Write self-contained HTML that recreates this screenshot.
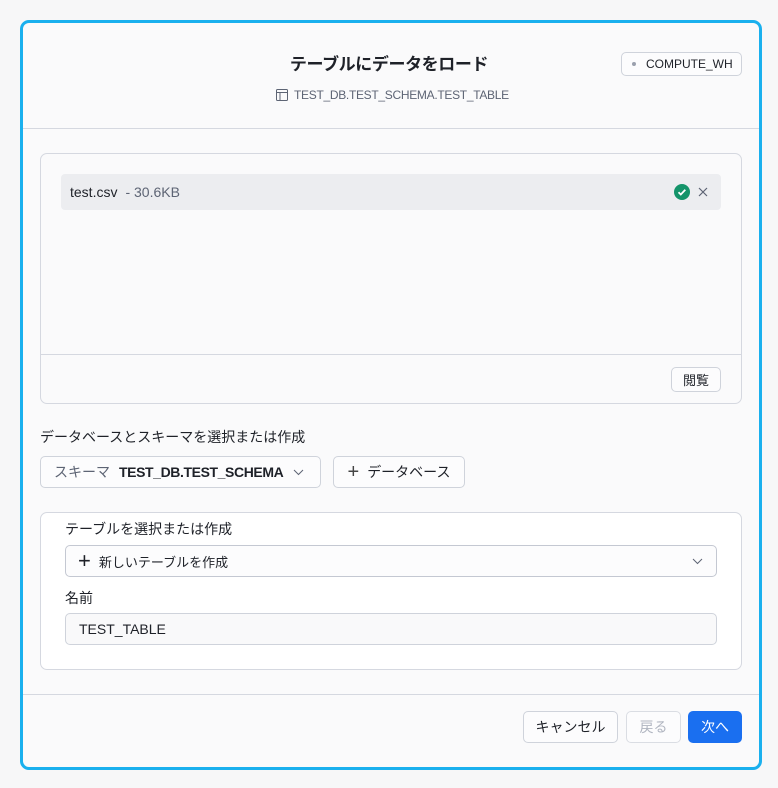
<!DOCTYPE html>
<html><head><meta charset="utf-8"><style>
*{box-sizing:border-box;margin:0;padding:0}
body{width:778px;height:788px;background:#f7f7f8;font-family:"Liberation Sans","Noto Sans CJK JP",sans-serif;color:#1e2128;position:relative;overflow:hidden}
.frame{position:absolute;left:20px;top:20px;width:742px;height:750px;border:3px solid #1ab0ee;border-radius:9px;background:#fafafb}
.a{position:absolute}
.box{position:absolute;border:1px solid #d5d8e0;border-radius:7px;background:#fafafb}
.btn{position:absolute;border:1px solid #cfd3db;border-radius:5px;background:#fcfcfd;font-size:14px;display:flex;align-items:center;justify-content:center}
</style></head><body>
<div class="frame"></div>
<div class="a" style="left:0;width:778px;top:50px;text-align:center;font-size:17px;font-weight:bold;letter-spacing:-0.4px">テーブルにデータをロード</div>
<div class="btn" style="left:621px;top:52px;width:121px;height:24px;font-size:12px;justify-content:flex-start;padding-left:10px"><span style="width:4px;height:4px;border-radius:2px;background:#9aa0ad;margin-right:10px"></span>COMPUTE_WH</div>
<div class="a" style="left:276px;top:88px;font-size:12px;color:#5d6474;display:flex;align-items:center;letter-spacing:-0.3px">
<svg width="12" height="12" viewBox="0 0 12 12" style="margin-right:6px"><rect x="0.5" y="0.5" width="11" height="11" rx="1" fill="none" stroke="#5d6474"/><line x1="0.5" y1="3.5" x2="11.5" y2="3.5" stroke="#5d6474"/><line x1="4" y1="3.5" x2="4" y2="11.5" stroke="#5d6474"/></svg>TEST_DB.TEST_SCHEMA.TEST_TABLE</div>
<div class="a" style="left:23px;width:736px;top:128px;height:1px;background:#d5d8e0"></div>

<div class="box" style="left:40px;top:153px;width:702px;height:251px"></div>
<div class="a" style="left:61px;top:174px;width:660px;height:36px;background:#ecedf0;border-radius:4px;font-size:14px;display:flex;align-items:center;padding-left:9px">test.csv<span style="color:#5d6474;margin-left:8px">- 30.6KB</span></div>
<svg class="a" style="left:674px;top:184px" width="16" height="16" viewBox="0 0 16 16"><circle cx="8" cy="8" r="8" fill="#14946a"/><path d="M4.5 8.2l2.3 2.3 4.5-4.7" stroke="#fff" stroke-width="1.8" fill="none"/></svg>
<svg class="a" style="left:698px;top:187px" width="10" height="10" viewBox="0 0 10 10"><path d="M1 1l8 8M9 1l-8 8" stroke="#5d6474" stroke-width="1.2"/></svg>
<div class="a" style="left:41px;width:700px;top:354px;height:1px;background:#d5d8e0"></div>
<div class="btn" style="left:671px;top:367px;width:50px;height:25px;font-size:13px">閲覧</div>

<div class="a" style="left:40px;top:427px;font-size:14px">データベースとスキーマを選択または作成</div>
<div class="btn" style="left:40px;top:456px;width:281px;height:32px;justify-content:flex-start;padding-left:13px"><span style="color:#5d6474;margin-right:9px">スキーマ</span><b style="letter-spacing:-0.4px">TEST_DB.TEST_SCHEMA</b>
<svg style="margin-left:10px" width="11" height="7" viewBox="0 0 11 7"><path d="M1 1l4.5 4.5L10 1" stroke="#5d6474" fill="none"/></svg></div>
<div class="btn" style="left:333px;top:456px;width:132px;height:32px"><span style="font-size:20px;font-weight:300;margin-right:8px;color:#444">+</span>データベース</div>

<div class="box" style="left:40px;top:512px;width:702px;height:158px;background:#fff"></div>
<div class="a" style="left:65px;top:519px;font-size:14px">テーブルを選択または作成</div>
<div class="btn" style="left:65px;top:545px;width:652px;height:32px;justify-content:flex-start;padding-left:12px;font-size:13px;border-color:#c4c8d2"><span style="font-size:22px;font-weight:300;margin-right:8px;line-height:1">+</span>新しいテーブルを作成
<svg style="position:absolute;right:13px;top:12px" width="11" height="7" viewBox="0 0 11 7"><path d="M1 1l4.5 4.5L10 1" stroke="#5d6474" fill="none"/></svg></div>
<div class="a" style="left:65px;top:588px;font-size:14px">名前</div>
<div class="btn" style="left:65px;top:613px;width:652px;height:32px;justify-content:flex-start;padding-left:13px;background:#f9f9fa">TEST_TABLE</div>

<div class="a" style="left:23px;width:736px;top:694px;height:1px;background:#d5d8e0"></div>
<div class="btn" style="left:523px;top:711px;width:95px;height:32px">キャンセル</div>
<div class="btn" style="left:626px;top:711px;width:55px;height:32px;color:#b0b5c0;border-color:#dadde3">戻る</div>
<div class="btn" style="left:688px;top:711px;width:54px;height:32px;background:#1a6ff0;border-color:#1a6ff0;color:#fff">次へ</div>
</body></html>
